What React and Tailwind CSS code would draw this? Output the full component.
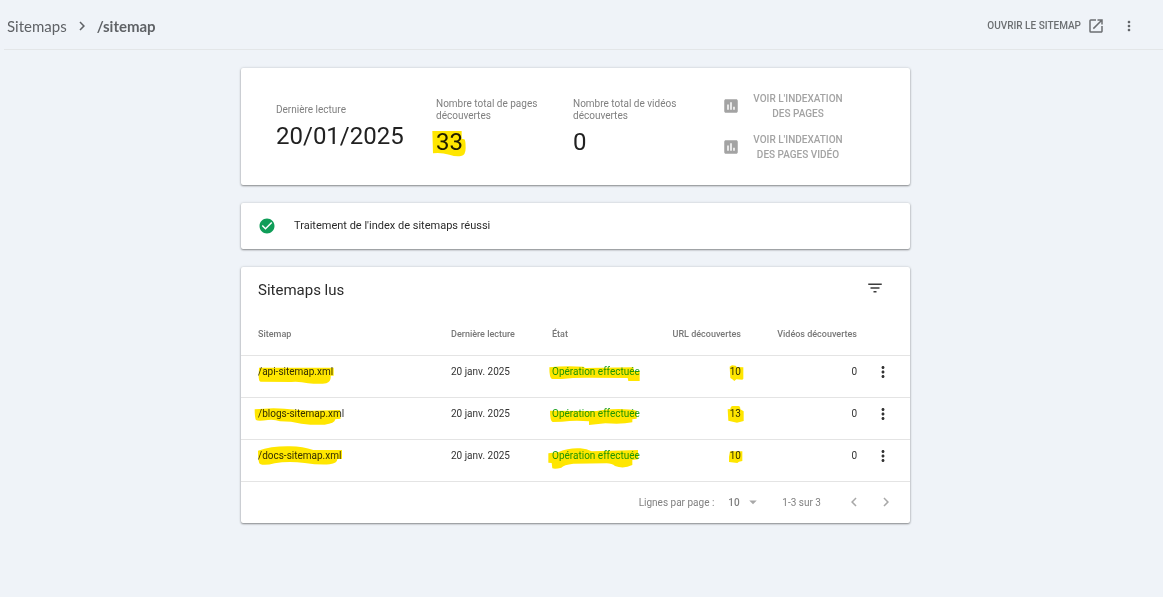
import React from "react";
import {
  MdArrowDropDown,
  MdCheckCircle,
  MdChevronLeft,
  MdChevronRight,
  MdFilterList,
  MdInsertChart,
  MdMoreVert,
  MdOpenInNew,
} from "react-icons/md";

const rows = [
  {
    path: "/api-sitemap.xml",
    urls: 10,
    pathMark: "M3 5H227V29H218Q220 47 205 52Q185 55 150 52Q125 46 100 48L8 47Q2 47 2 30Z",
    stateMark: "M-8 4Q40 -2 94 2L99 6L244 4L246 15H263V45H229L227 36L104 35Q60 35 30 39L0 39Q-8 37 -8 4Z",
    urlMark: "M-1 2L6 -2L17 -1L20 3L40 4V38L37 41L19 40L13 45L7 40L1 36Z",
  },
  {
    path: "/blogs-sitemap.xml",
    urls: 13,
    pathMark:
      "M-10 4L46 1Q60 1 96 4L160 8L246 6L248 32L232 34Q230 47 200 50Q170 52 130 47Q100 40 66 40Q50 34 30 36Q0 40 -6 36Q-10 30 -10 4Z",
    stateMark:
      "M-6 8L134 9Q160 3 200 3Q235 4 254 8V32L241 34V43Q210 50 160 46L111 51V40Q70 36 30 41L2 42Q-6 40 -6 8Z",
    urlMark: "M-7 4L1 3Q2 -6 8 -6H25Q31 -6 31 4L41 10V39L21 44L-5 38Z",
  },
  {
    path: "/docs-sitemap.xml",
    urls: 10,
    pathMark:
      "M0 2Q40 -12 96 -11Q135 -10 166 0L252 0V27H238Q238 40 215 43Q180 45 140 39Q90 32 50 40Q20 48 6 42Q0 38 0 2Z",
    stateMark:
      "M-11 10L20 6Q50 -7 85 -5Q105 -4 119 4L258 0V28L241 30V45Q215 58 189 48Q180 40 164 40L64 41Q35 44 28 53Q10 58 1 55L-1 39L-11 38Z",
    urlMark: "M0 4H37V33L27 35L22 39L-3 36V20Z",
  },
];

// Text with a highlighter stroke over it; strokes are drawn at three units per pixel.
function Marked({ d, children }) {
  return (
    <span className="relative inline-block">
      {children}
      <svg
        aria-hidden="true"
        viewBox="0 0 300 60"
        className="pointer-events-none absolute top-0 left-0 h-5 w-[100px] max-w-none overflow-visible mix-blend-multiply"
      >
        <path d={d} fill="#ffe600" />
      </svg>
    </span>
  );
}

function Card({ className = "", children }) {
  return (
    <section className={`rounded-xs bg-white shadow-[0_1px_2px_rgba(0,0,0,0.4),0_0_3px_rgba(0,0,0,0.14)] ${className}`}>
      {children}
    </section>
  );
}

function Stat({ label, className, children }) {
  return (
    <div className={className}>
      <div className="text-[10px] leading-3 text-[#808080]">{label}</div>
      <div className="mt-1.5 text-2xl leading-7 text-[#212121]">{children}</div>
    </div>
  );
}

function IndexButton({ children }) {
  return (
    <button type="button" className="flex items-center gap-2.5 text-[10px] leading-[15px] font-medium text-[#a3a3a3]">
      <MdInsertChart className="size-[18px]" />
      <span className="w-24 text-center">{children}</span>
    </button>
  );
}

export default function App() {
  return (
    <div className="min-h-screen bg-[#eff3f8] font-['Roboto',sans-serif]">
      <header className="ml-1 flex h-[50px] items-center justify-between border-b border-[#e3e6e8] pt-0.5 pr-[26px] pl-[3px] text-[#5f6266]">
        <nav aria-label="Fil d'Ariane" className="flex items-center gap-1.5 font-['Lato',sans-serif] text-[15px] leading-5">
          <a href="#sitemaps">Sitemaps</a>
          <MdChevronRight className="size-[18px]" />
          <span className="font-bold">/sitemap</span>
        </nav>
        <div className="flex items-center gap-4">
          <a href="#sitemap" className="flex items-center gap-1.5 text-[10px] font-medium text-[#6c6f72]">
            OUVRIR LE SITEMAP
            <MdOpenInNew className="size-[18px]" />
          </a>
          <button type="button" aria-label="Plus d'options">
            <MdMoreVert className="size-4" />
          </button>
        </div>
      </header>

      <main className="pt-[18px] pr-3">
        <div className="mx-auto flex max-w-[669px] flex-col gap-[18px]">
          <Card className="flex items-center px-[35px] py-[23px]">
            <Stat label="Dernière lecture" className="w-40">
              20/01/2025
            </Stat>
            <Stat label={<>Nombre total de pages<br />découvertes</>} className="w-[137px]">
              <Marked d="M-11 9H77V32L85 34Q89 36 89 60Q89 82 75 84Q60 87 40 80Q15 73 -9 76Z">33</Marked>
            </Stat>
            <Stat label={<>Nombre total de vidéos<br />découvertes</>} className="w-[149px]">
              0
            </Stat>
            <div className="flex flex-col gap-[11px]">
              <IndexButton>VOIR L'INDEXATION DES PAGES</IndexButton>
              <IndexButton>VOIR L'INDEXATION DES PAGES VIDÉO</IndexButton>
            </div>
          </Card>

          <Card className="flex h-[46px] items-center gap-[18px] px-[17px] text-[11px] text-[#2b2b2b]">
            <MdCheckCircle className="size-[18px] text-[#0f9d58]" />
            Traitement de l'index de sitemaps réussi
          </Card>

          <Card>
            <div className="flex h-[46px] items-center justify-between pr-[26px] pl-[17px]">
              <h2 className="text-[15px] text-[#2b2b2b]">Sitemaps lus</h2>
              <button type="button" aria-label="Filtrer" className="pb-1 text-[#3c3c3c]">
                <MdFilterList className="size-[18px]" />
              </button>
            </div>
            <table className="w-full table-fixed leading-3">
              <thead>
                <tr className="h-[42px] border-b border-[#e4e4e4] text-left text-[9px] text-[#777777]">
                  <th className="pl-[17px] font-medium">Sitemap</th>
                  <th className="w-[101px] font-medium">Dernière lecture</th>
                  <th className="w-[100px] font-medium">État</th>
                  <th className="w-[89px] text-right font-medium">URL découvertes</th>
                  <th className="w-[116px] text-right font-medium">Vidéos découvertes</th>
                  <th className="w-[53px]" aria-label="Actions" />
                </tr>
              </thead>
              <tbody>
                {rows.map((r) => (
                  <tr key={r.path} className="h-[42px] border-b border-[#e4e4e4] text-[10px] text-[#333333]">
                    <td className="pb-2 pl-[17px]">
                      <Marked d={r.pathMark}>{r.path}</Marked>
                    </td>
                    <td className="pb-2">20 janv. 2025</td>
                    <td className="pb-2 text-[#22a52a]">
                      <Marked d={r.stateMark}>Opération effectuée</Marked>
                    </td>
                    <td className="pb-2 text-right">
                      <Marked d={r.urlMark}>{r.urls}</Marked>
                    </td>
                    <td className="pb-2 text-right">0</td>
                    <td className="pb-2 pl-[17px]">
                      <button type="button" aria-label={`Options pour ${r.path}`} className="block">
                        <MdMoreVert className="size-[18px]" />
                      </button>
                    </td>
                  </tr>
                ))}
              </tbody>
            </table>
            <div className="flex h-[41px] items-center justify-end pr-[15px] text-[10px] text-[#808080]">
              <label htmlFor="page-size">Lignes par page :</label>
              <div className="relative ml-3.5 flex items-center">
                <select id="page-size" defaultValue="10" className="w-[34px] appearance-none bg-transparent font-medium">
                  <option>10</option>
                  <option>25</option>
                  <option>50</option>
                </select>
                <MdArrowDropDown className="pointer-events-none absolute right-0 size-[18px] text-[#a8a8a8]" />
              </div>
              <span className="ml-5">1-3 sur 3</span>
              <button type="button" aria-label="Page précédente" className="ml-6 text-[#a8a8a8]">
                <MdChevronLeft className="size-[18px]" />
              </button>
              <button type="button" aria-label="Page suivante" className="ml-3.5 text-[#a8a8a8]">
                <MdChevronRight className="size-[18px]" />
              </button>
            </div>
          </Card>
        </div>
      </main>
    </div>
  );
}
